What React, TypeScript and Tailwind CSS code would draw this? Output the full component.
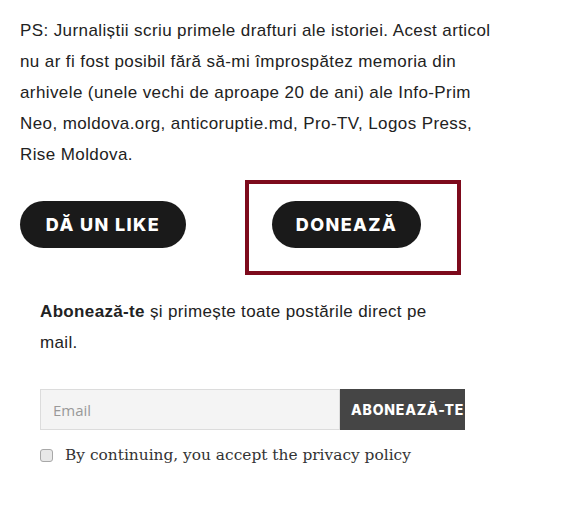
import { useState } from "react";

export default function App() {
  const [email, setEmail] = useState("");
  const [accepted, setAccepted] = useState(false);

  return (
    <main className="w-[576px] h-[506px] bg-white text-[#222] font-['Liberation_Sans',Arial,sans-serif] pl-5 pt-[15px]">
      <p className="w-[486px] text-[17px] tracking-[0.4px] leading-[31px]">
        PS: Jurnaliștii scriu primele drafturi ale istoriei. Acest articol nu ar fi fost posibil fără
        să-mi împrospătez memoria din arhivele (unele vechi de aproape 20 de ani) ale Info-Prim Neo,
        moldova.org, anticoruptie.md, Pro-TV, Logos Press, Rise Moldova.
      </p>

      <div className="flex items-start mt-[10px]">
        <button className="mt-[21px] w-[166px] h-[47px] rounded-full bg-[#1a1a1a] text-white font-['Inter',sans-serif] font-extrabold text-[18px] tracking-[1.4px]">
          DĂ UN LIKE
        </button>
        <div className="ml-[59px] w-[216px] h-[95px] border-4 border-[#7d0a1c] pt-[17px] pl-[23px]">
          <button className="w-[149px] h-[47px] rounded-full bg-[#1a1a1a] text-white font-['Inter',sans-serif] font-extrabold text-[18px] tracking-[1.4px]">
            DONEAZĂ
          </button>
        </div>
      </div>

      <div className="pl-5 mt-[21px]">
        <p className="w-[425px] text-[17px] tracking-[0.35px] leading-[31px]">
          <span className="font-bold">Abonează-te </span>și primește toate postările direct pe mail.
        </p>

        <form
          onSubmit={(e) => e.preventDefault()}
          className="flex w-[425px] h-[41px] mt-[31px] overflow-hidden">
          <input
            type="email"
            value={email}
            onChange={(e) => setEmail(e.target.value)}
            placeholder="Email"
            className="w-[300px] shrink-0 h-full bg-[#f4f4f4] border border-[#dcdcdc] pl-[12px] text-[15px] text-[#555] placeholder:text-[#999] outline-none font-['Open_Sans',sans-serif]"
          />
          <button
            type="submit"
            className="shrink-0 h-full bg-[#454545] text-white pl-[11px] pr-4 whitespace-nowrap font-['Inter',sans-serif] font-extrabold text-[14px] tracking-[0.8px]">
            ABONEAZĂ-TE
          </button>
        </form>

        <label className="flex items-center mt-[13px] gap-[12px] text-[15.4px] leading-[25px] text-[#333] font-['DejaVu_Serif',serif]">
          <input
            type="checkbox"
            checked={accepted}
            onChange={(e) => setAccepted(e.target.checked)}
            className="appearance-none w-[13px] h-[13px] m-0 rounded-[3px] border border-[#a8a8a8] bg-[#e8e8e8] checked:bg-[#454545]"
          />
          By continuing, you accept the privacy policy
        </label>
      </div>
    </main>
  );
}
